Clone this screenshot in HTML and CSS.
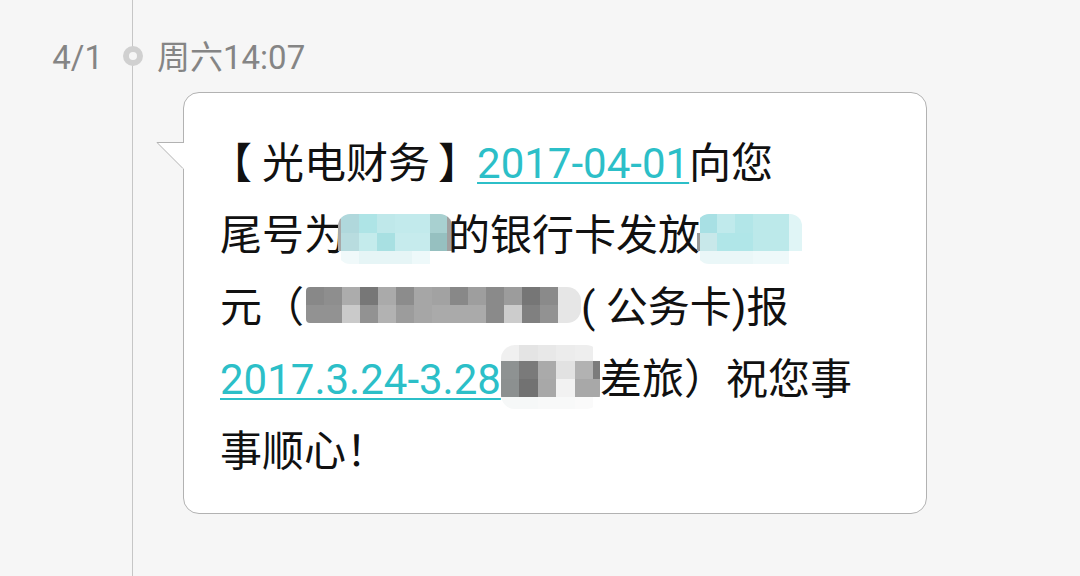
FILE: index.html
```html
<!DOCTYPE html>
<html>
<head>
    <meta charset="utf-8">
    <link rel="stylesheet" href="styles.css">
</head>
<body>
    <div class="page">
        <div class="dates">
            <div class="stamp date">4/1</div>
        </div>
        <div class="feed">
            <div class="stamp time"><span class="dot"></span>周六14:07</div>

            <div class="bubble">
                <svg class="tail" width="28" height="27" viewBox="0 0 28 27">
                    <polygon points="1,0.5 28,0.5 28,27 27,26.5" fill="#fff"/>
                    <polyline points="28,0.5 1,0.5 27,26.5" fill="none" stroke="#b2b2b2" stroke-width="1"/>
                </svg>
                <div class="line"><span class="lb">【</span>光电财务<span class="rb">】</span><a class="link">2017-04-01</a>向您</div>
                <div class="line">尾号为<span class="mosaic m1" data-m="m1"></span>的银行卡发放<span class="mosaic m2" data-m="m2"></span></div>
                <div class="line">元（<span class="mosaic m3" data-m="m3"></span>( 公务卡)报</div>
                <div class="line"><a class="link">2017.3.24-3.28</a><span class="mosaic m4" data-m="m4"></span>差旅）祝您事</div>
                <div class="line">事顺心！</div>
            </div>
        </div>
    </div>

    <script>
        // pixelated blur over the hidden parts of the message
        var mosaics = {
            m1: {
                cols: [3, 18, 18, 18, 17, 18, 17, 5],
                rows: [19, 18, 13],
                colors: [
                    ["#a8a8a8", "#b0d8dc", "#aee4e6", "#bfe8ea", "#c2eaec", "#c2eaec", "#a8d0d0", "#a0a0a0"],
                    ["#a8a8a8", "#b8dcdf", "#c4ebec", "#a8e0e2", "#c6ebed", "#c6ebed", "#96c0c0", "#a0a0a0"],
                    ["", "#f0f9fa", "#e6f5f6", "#e6f5f6", "#e6f5f6", "#eef9fa", "", ""]
                ]
            },
            m2: {
                cols: [3, 17, 18, 18, 36, 13],
                rows: [19, 18, 13],
                colors: [
                    ["", "#a8e0e4", "#c0eaec", "#b2e6e8", "#bce9ea", "#e0f5f6"],
                    ["#999999", "#c8e8ea", "#b0e6e8", "#b0e6e8", "#bce9ea", "#e0f5f6"],
                    ["", "#eaf7f8", "#eaf7f8", "#eaf7f8", "#eef9fa", ""]
                ]
            },
            m3: {
                cols: [18, 18, 18, 18, 18, 18, 18, 18, 18, 18, 18, 18, 18, 18, 23],
                rows: [18, 18],
                colors: [
                    ["#888888", "#8e8e8e", "#acacac", "#777777", "#aaaaaa", "#8c8c8c", "#a6a6a6", "#a2a2a2", "#888888", "#9e9e9e", "#8a8a8a", "#9c9c9c", "#767676", "#8a8a8a", "#e6e6e6"],
                    ["#929292", "#929292", "#cacaca", "#929292", "#b2b2b2", "#9c9c9c", "#a6a6a6", "#aaaaaa", "#aaaaaa", "#aaaaaa", "#8a8a8a", "#cccccc", "#808080", "#929292", "#e6e6e6"]
                ]
            },
            m4: {
                cols: [18, 19, 18, 19, 18, 7],
                rows: [16, 18, 18, 12],
                colors: [
                    ["#f0f0f0", "#e4e4e4", "#e8e8e8", "#ececec", "#eeeeee", ""],
                    ["#8e9292", "#7a7a7a", "#aaaaaa", "#e2e2e2", "#b2b2b2", "#7c7c7c"],
                    ["#8c9090", "#727272", "#a8a8a8", "#f2f2f2", "#a8a8a8", "#a8a8a8"],
                    ["#f6f8f8", "#f6f8f8", "#f8f9f9", "#f8f9f9", "#fafafa", ""]
                ]
            }
        };

        var spots = document.querySelectorAll(".mosaic");
        for (var k = 0; k < spots.length; k++) {
            var el = spots[k];
            var m = mosaics[el.getAttribute("data-m")];
            var grid = document.createElement("span");
            grid.className = "cells";
            grid.style.gridTemplateColumns = m.cols.join("px ") + "px";
            grid.style.gridTemplateRows = m.rows.join("px ") + "px";
            for (var i = 0; i < m.rows.length; i++) {
                for (var j = 0; j < m.cols.length; j++) {
                    var cell = document.createElement("span");
                    if (m.colors[i][j]) {
                        cell.style.background = m.colors[i][j];
                    }
                    grid.appendChild(cell);
                }
            }
            el.appendChild(grid);
        }
    </script>
</body>
</html>
```

FILE: styles.css
```css
html, body {
    margin: 0;
    padding: 0;
}
body {
    background: #f6f6f6;
    font-family: Roboto, "Noto Sans CJK SC", sans-serif;
    color: #111;
}
.page {
    display: flex;
    min-height: 100vh;
}
.dates {
    width: 132px;
    padding-top: 38px;
}
.feed {
    flex: 1;
    border-left: 1px solid #c6c6c6;
    padding-top: 38px;
}
.stamp {
    height: 40px;
    line-height: 40px;
    font-size: 33px;
    color: #858585;
    white-space: nowrap;
}
.date {
    text-align: right;
    padding-right: 29px;
}
.time {
    position: relative;
    padding-left: 24px;
}
.dot {
    position: absolute;
    left: -10px;
    top: 8px;
    width: 8px;
    height: 8px;
    border: 6px solid #d0d0d0;
    border-radius: 50%;
    background: #f6f6f6;
}
.bubble {
    position: relative;
    box-sizing: border-box;
    width: 744px;
    margin: 14px 0 0 50px;
    padding: 35px 0 0 36px;
    height: 422px;
    background: #fff;
    border: 1px solid #b2b2b2;
    border-radius: 16px;
    font-size: 42px;
}
.tail {
    position: absolute;
    left: -28px;
    top: 49px;
    display: block;
}
.line {
    height: 71px;
    line-height: 71px;
    white-space: nowrap;
}
.line + .line {
    margin-top: 1px;
}
.lb {
    margin: 0 10px 0 -10px;
}
.rb {
    margin: 0 -3px 0 8px;
}
.link {
    color: #2cbfc8;
    text-decoration: underline;
    text-decoration-thickness: 2px;
    text-underline-offset: 4px;
}
.mosaic {
    display: inline-block;
    overflow: hidden;
    border-radius: 12px;
    line-height: 0;
}
.cells {
    display: grid;
}
.m1 {
    margin: 0 -4px 0 -8px;
    vertical-align: -14px;
}
.m2 {
    margin-left: -3px;
    vertical-align: -14px;
}
.m3 {
    margin-left: 2px;
    vertical-align: -1px;
    border-radius: 4px 14px 14px 4px;
}
.m4 {
    vertical-align: -15px;
    border-radius: 14px;
}
```
